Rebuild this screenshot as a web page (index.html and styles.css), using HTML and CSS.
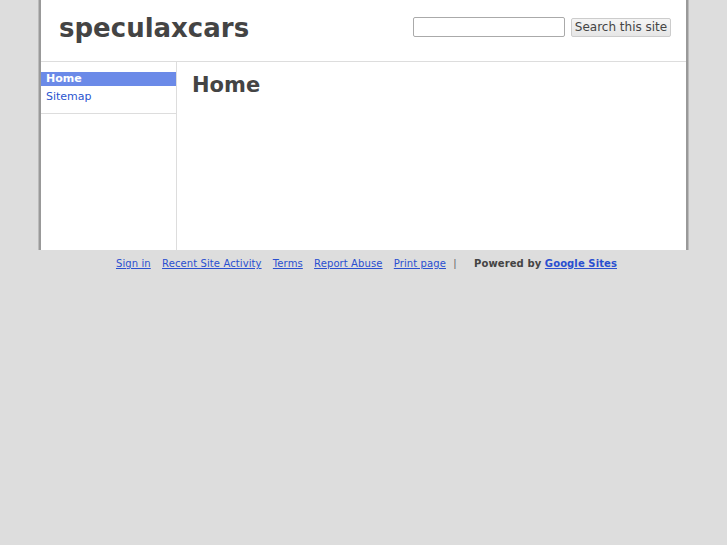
FILE: index.html
```
<!DOCTYPE html>
<html lang="en">
<head>
    <meta charset="UTF-8">
    <title>speculaxcars</title>
    <link rel="stylesheet" href="styles.css">
</head>
<body>
<div class="wrap">
    <div class="header">
        <h1 class="site-title">speculaxcars</h1>
        <form class="search">
            <input type="text" class="search-box">
            <button type="button" class="search-btn">Search this site</button>
        </form>
    </div>
    <div class="main">
        <div class="sidebar">
            <ul class="nav">
                <li class="current"><a href="#">Home</a></li>
                <li><a href="#">Sitemap</a></li>
            </ul>
        </div>
        <div class="content">
            <h2 class="page-title">Home</h2>
        </div>
    </div>
</div>
<div class="footer">
    <a href="#">Sign in</a>
    <a href="#">Recent Site Activity</a>
    <a href="#">Terms</a>
    <a href="#">Report Abuse</a>
    <a href="#">Print page</a>
    <span class="sep">|</span>
    <span class="powered">Powered by <a href="#">Google Sites</a></span>
</div>
</body>
</html>
```
FILE: styles.css
```
* {
    margin: 0;
    padding: 0;
}

body {
    background: #dddddd;
    font-family: "DejaVu Sans", Verdana, sans-serif;
    color: #444;
}

.wrap {
    width: 645px;
    margin: 0 auto;
    background: #fff;
    box-shadow: -2px 0 0 #999, -3px 0 0 #bbb, 2px 0 0 #999, 3px 0 0 #bbb;
}

.header {
    height: 61px;
    border-bottom: 1px solid #ddd;
    display: flex;
    align-items: center;
    justify-content: space-between;
    padding: 0 15px 0 18px;
}

.site-title {
    font-size: 26px;
    font-weight: bold;
    color: #444;
    margin-top: -5px;
}

.search {
    display: flex;
    align-items: center;
    gap: 6px;
    margin-top: -7px;
}

.search-box {
    width: 152px;
    height: 20px;
    box-sizing: border-box;
    border: 1px solid #aaa;
    border-radius: 2px;
}

.search-btn {
    width: 100px;
    height: 19px;
    font-family: "DejaVu Sans", Verdana, sans-serif;
    font-size: 12px;
    color: #444;
    background: linear-gradient(#f5f5f5, #e6e6e6);
    border: 1px solid #ccc;
    border-radius: 2px;
}

.main {
    display: flex;
    height: 188px;
}

.sidebar {
    width: 135px;
    border-right: 1px solid #ddd;
}

.nav {
    list-style: none;
    padding: 10px 0 7px 0;
    border-bottom: 1px solid #ddd;
}

.nav li {
    font-size: 11px;
    line-height: 14px;
    padding-left: 5px;
}

.nav li + li {
    line-height: 19px;
    padding-top: 1px;
}

.nav a {
    color: #2a55d0;
    text-decoration: none;
}

.nav li.current {
    background: #6b8ae8;
}

.nav li.current a {
    color: #fff;
    font-weight: bold;
}

.content {
    flex: 1;
    padding: 11px 15px;
}

.page-title {
    font-size: 21px;
    font-weight: bold;
    color: #444;
}

.footer {
    text-align: center;
    font-size: 10px;
    letter-spacing: 0.1px;
    padding-top: 8px;
    padding-left: 2px;
}

.footer a {
    color: #2a4fd0;
    margin: 0 4px;
}

.footer .sep {
    color: #666;
    margin-right: 14px;
}

.footer .powered {
    font-weight: bold;
    color: #444;
}

.footer .powered a {
    margin: 0;
}
```
